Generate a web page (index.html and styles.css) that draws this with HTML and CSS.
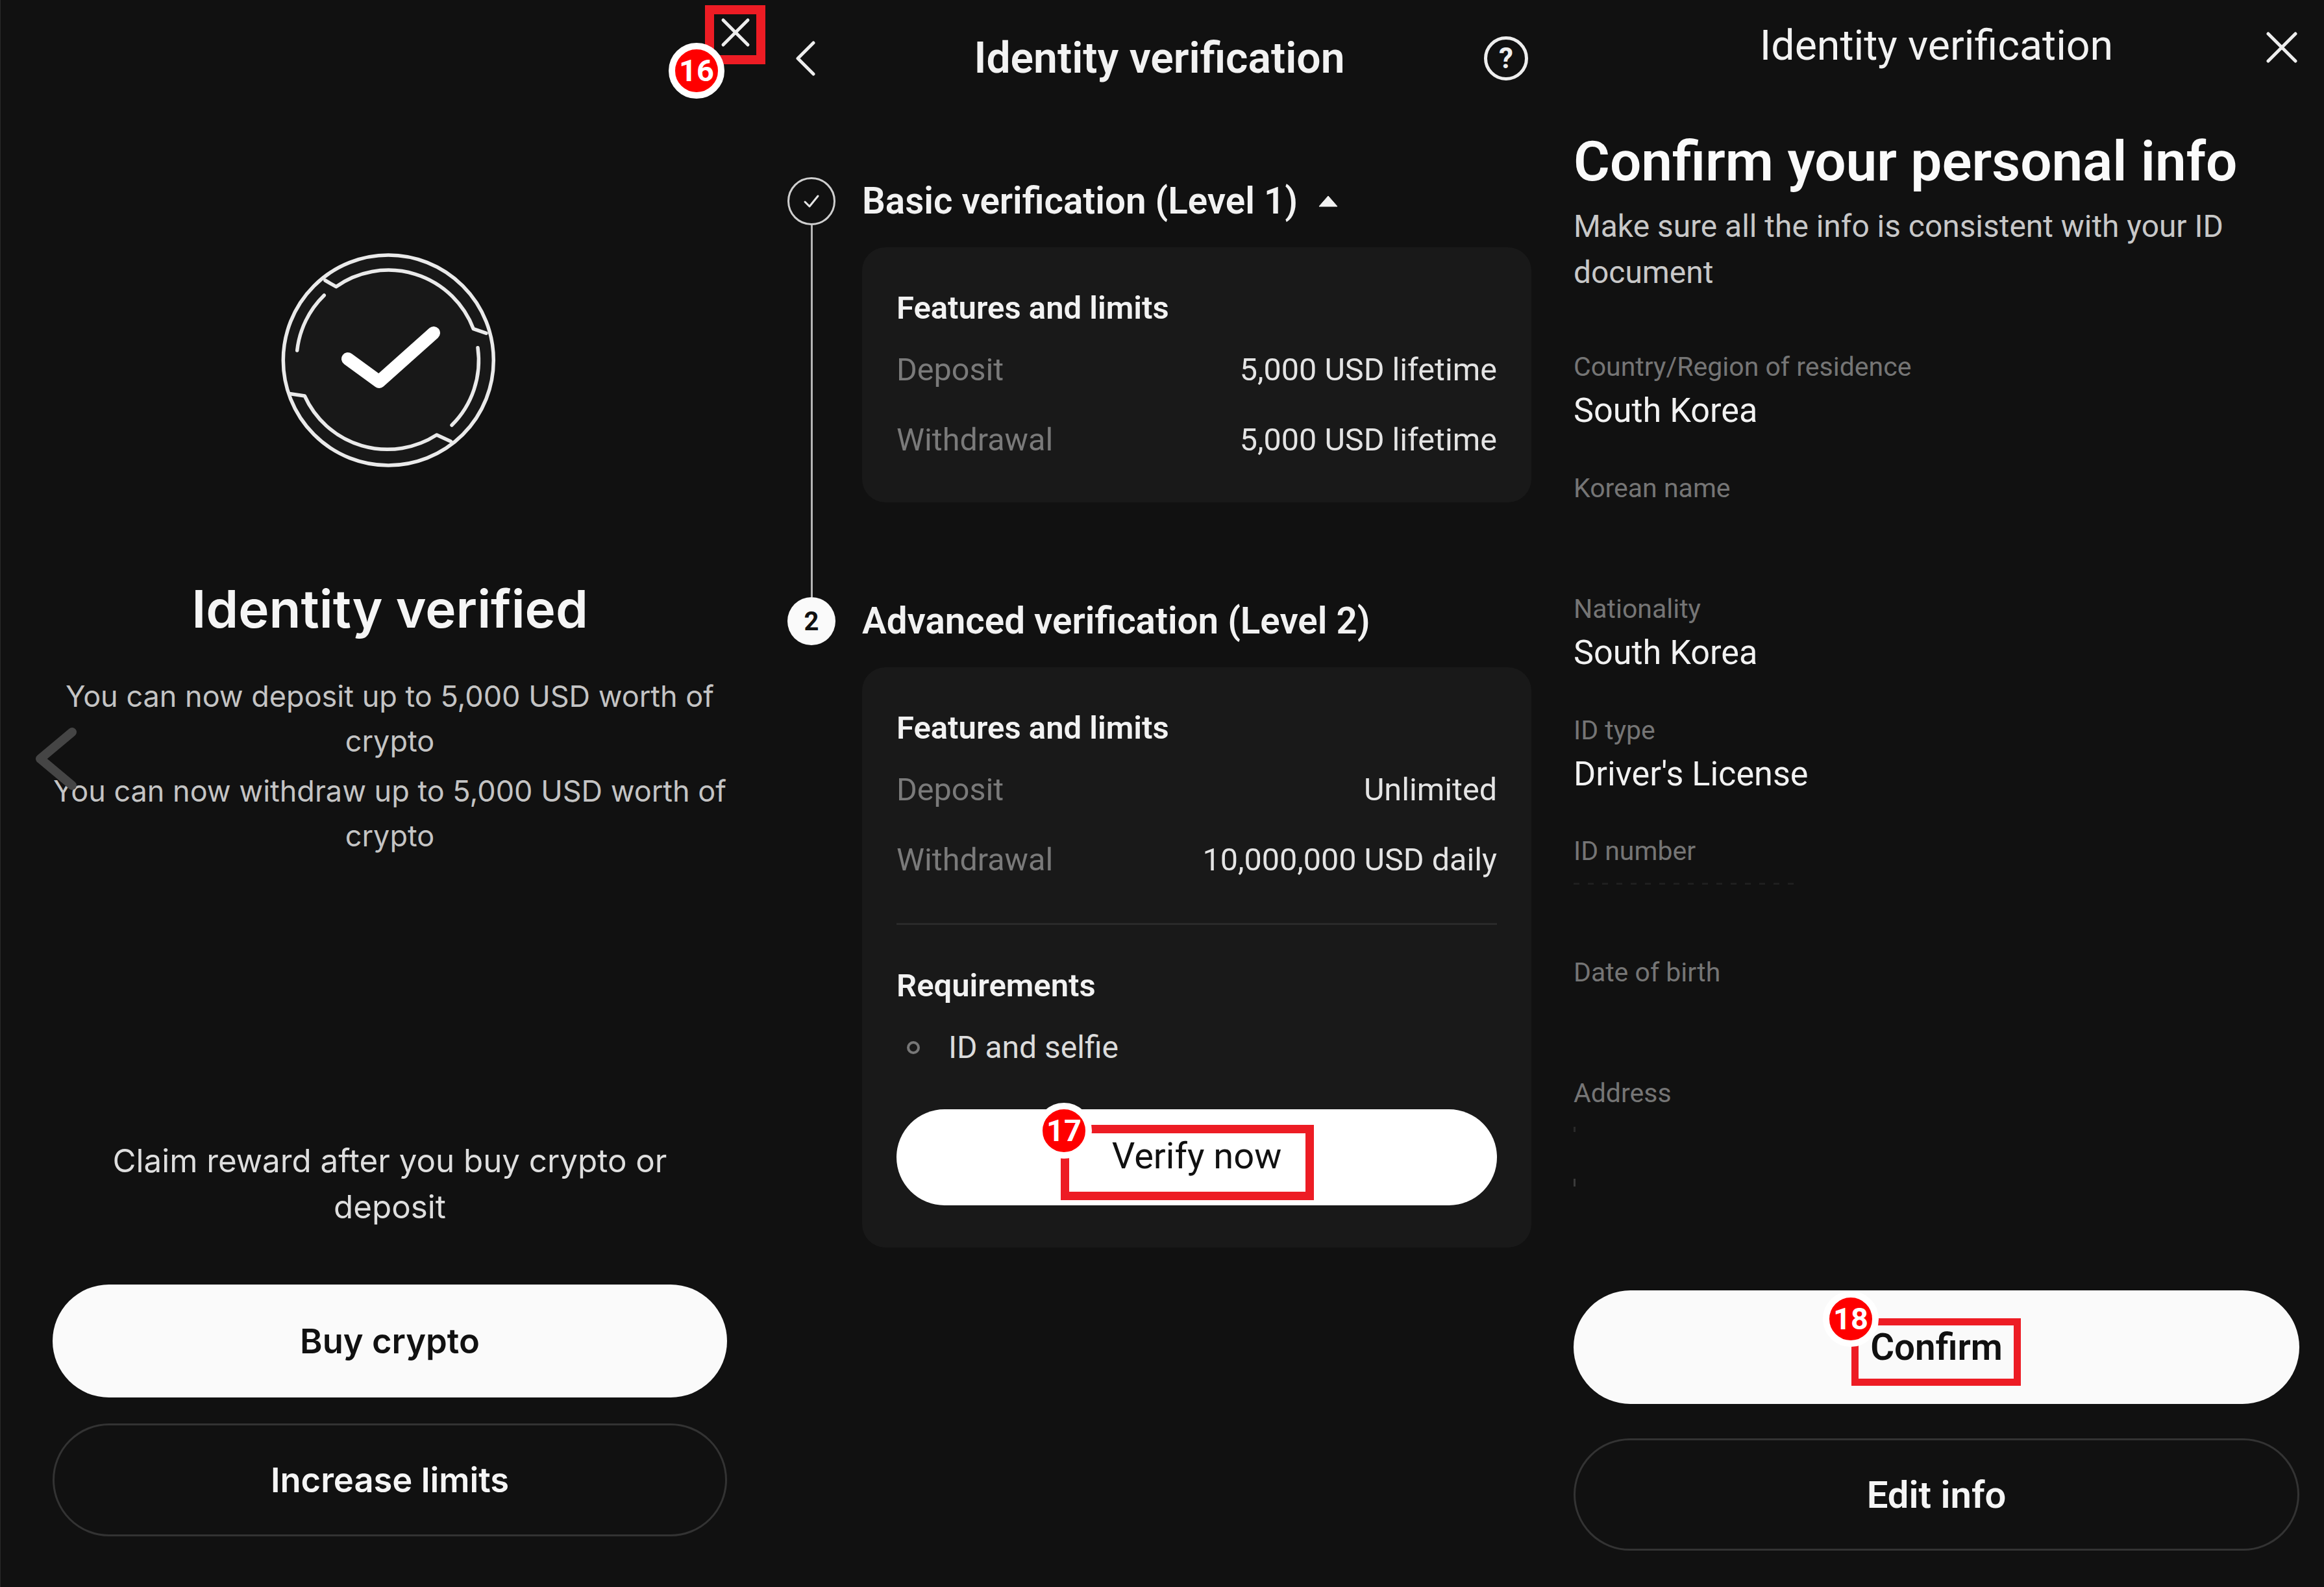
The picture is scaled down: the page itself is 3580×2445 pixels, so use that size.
FILE: index.html
```html
<!DOCTYPE html>
<html lang="en">
<head>
<meta charset="utf-8">
<title>Identity verification</title>
<link rel="stylesheet" href="styles.css">
</head>
<body>
<main class="screens">

  <section class="panel panel-result">
    <svg class="seal" viewBox="0 0 400 370" width="400" height="370" aria-hidden="true">
      <circle class="seal-disc" cx="197.3" cy="185" r="162"/>
      <path class="seal-line" d="M100 62 L116.7 71.7 A140 140 0 0 1 328.3 136.7 L348 143.3"/>
      <path class="seal-line" d="M46.7 236.7 L68.3 240 A140 140 0 0 0 271.7 300 L293.3 310"/>
      <path class="seal-line" d="M98.3 85 A140 140 0 0 0 56.7 170"/>
      <path class="seal-line" d="M335 165.7 A140 140 0 0 1 295 285"/>
      <path class="seal-check" d="M135 183 L183 218 L267 143"/>
    </svg>
    <h2 class="result-title">Identity verified</h2>
    <p class="result-text">You can now deposit up to 5,000 USD worth of<br>crypto</p>
    <p class="result-text result-text-next">You can now withdraw up to 5,000 USD worth of<br>crypto</p>
    <div class="result-foot">
      <p class="result-claim">Claim reward after you buy crypto or<br>deposit</p>
      <div class="actions actions-result">
        <button class="btn btn-solid btn-result">Buy crypto</button>
        <button class="btn btn-ghost btn-result">Increase limits</button>
      </div>
    </div>
    <svg class="ghost-chevron" viewBox="0 0 66 96" width="66" height="96" aria-hidden="true"><path d="M58 7 L9 48 L58 89"/></svg>
    <svg class="close-16" viewBox="0 0 48 48" width="48" height="48" aria-hidden="true"><path d="M5 5 L43 43 M43 5 L5 43"/></svg>
    <div class="callout callout-16"></div>
    <div class="badge badge-16">16</div>
  </section>

  <section class="panel panel-levels">
    <header class="topbar topbar-levels">
      <svg class="back" viewBox="0 0 30 54" width="30" height="54" aria-hidden="true"><path d="M27 3 L3 27 L27 51"/></svg>
      <h1 class="topbar-title">Identity verification</h1>
      <div class="help">?</div>
    </header>

    <div class="step step-first">
      <div class="rail">
        <div class="node node-done">
          <svg viewBox="0 0 30 30" width="30" height="30" aria-hidden="true"><path d="M5 16 L12 23 L25 7"/></svg>
        </div>
        <div class="rail-line"></div>
      </div>
      <div class="step-body">
        <div class="step-head">
          <h3 class="step-title">Basic verification (Level 1)</h3>
          <svg class="caret" viewBox="0 0 32 20" width="32" height="20" aria-hidden="true"><path d="M16 2 L30 18 L2 18 Z"/></svg>
        </div>
        <div class="card">
          <h4 class="card-title">Features and limits</h4>
          <div class="row"><span class="row-key">Deposit</span><span class="row-val">5,000 USD lifetime</span></div>
          <div class="row row-next"><span class="row-key">Withdrawal</span><span class="row-val">5,000 USD lifetime</span></div>
        </div>
      </div>
    </div>

    <div class="step">
      <div class="rail">
        <div class="node node-todo">2</div>
      </div>
      <div class="step-body">
        <div class="step-head">
          <h3 class="step-title">Advanced verification (Level 2)</h3>
        </div>
        <div class="card">
          <h4 class="card-title">Features and limits</h4>
          <div class="row"><span class="row-key">Deposit</span><span class="row-val">Unlimited</span></div>
          <div class="row row-next"><span class="row-key">Withdrawal</span><span class="row-val">10,000,000 USD daily</span></div>
          <div class="divider"></div>
          <h4 class="card-title">Requirements</h4>
          <div class="req"><span class="req-dot"></span><span class="req-text">ID and selfie</span></div>
          <button class="btn btn-white btn-verify">Verify now</button>
        </div>
      </div>
    </div>

    <div class="callout callout-17"></div>
    <div class="badge badge-17">17</div>
  </section>

  <section class="panel panel-confirm">
    <header class="topbar topbar-confirm">
      <span></span>
      <h1 class="topbar-title topbar-title-light">Identity verification</h1>
      <svg class="close" viewBox="0 0 48 48" width="48" height="48" aria-hidden="true"><path d="M3 3 L45 45 M45 3 L3 45"/></svg>
    </header>
    <h2 class="confirm-title">Confirm your personal info</h2>
    <p class="confirm-text">Make sure all the info is consistent with your ID<br>document</p>
    <dl class="fields">
      <div class="field"><dt class="field-label">Country/Region of residence</dt><dd class="field-value">South Korea</dd></div>
      <div class="field"><dt class="field-label">Korean name</dt><dd class="field-value"></dd></div>
      <div class="field"><dt class="field-label">Nationality</dt><dd class="field-value">South Korea</dd></div>
      <div class="field"><dt class="field-label">ID type</dt><dd class="field-value">Driver's License</dd></div>
      <div class="field"><dt class="field-label">ID number</dt><dd class="field-value"><span class="redacted"></span></dd></div>
      <div class="field"><dt class="field-label">Date of birth</dt><dd class="field-value"></dd></div>
      <div class="field"><dt class="field-label">Address</dt><dd class="field-value"><span class="speck"></span><span class="speck speck-next"></span></dd></div>
    </dl>
    <div class="actions actions-confirm">
      <button class="btn btn-solid btn-confirm">Confirm</button>
      <button class="btn btn-ghost btn-edit">Edit info</button>
    </div>
    <div class="callout callout-18"></div>
    <div class="badge badge-18">18</div>
  </section>

</main>
</body>
</html>
```

FILE: styles.css
```css
* { box-sizing: border-box; }
html, body { margin: 0; padding: 0; background: #111; }
body { width: 3580px; height: 2445px; overflow: hidden; font-family: Roboto, "Noto Sans", "Liberation Sans", sans-serif; color: #f2f2f2; }
h1, h2, h3, h4, p, dl, dd { margin: 0; }

.screens { display: grid; grid-template-columns: 1195px 1185px 1200px; height: 2445px; }
.panel { position: relative; display: flex; flex-direction: column; height: 2445px; }

/* result panel */
.panel-result { padding: 370px 75px 78px 80px; border-left: 1px solid #2a2a2a; font-family: Inter, "Noto Sans", sans-serif; }
.seal { display: block; align-self: center; flex: none; }
.seal-disc { fill: #181818; stroke: #eaeaea; stroke-width: 5.5; }
.seal-line { fill: none; stroke: #eaeaea; stroke-width: 5.5; stroke-linecap: round; stroke-linejoin: round; }
.seal-check { fill: none; stroke: #fff; stroke-width: 20; stroke-linecap: round; stroke-linejoin: round; }
.result-title { margin-top: 148px; font-size: 80px; line-height: 100px; font-weight: 600; text-align: center; color: #f5f5f5; white-space: nowrap; }
.result-text { margin-top: 50px; font-size: 45px; line-height: 69px; text-align: center; color: #c4c4c4; white-space: nowrap; }
.result-text-next { margin-top: 8px; }
.result-foot { margin-top: auto; }
.result-claim { font-size: 49.3px; line-height: 71px; text-align: center; color: #dedede; white-space: nowrap; }

.actions { display: flex; flex-direction: column; }
.actions-result { margin-top: 84px; gap: 40px; }
.btn { display: block; width: 100%; border-radius: 100px; font: inherit; text-align: center; padding: 0; }
.btn-solid { background: #fafafa; border: 0; color: #111; font-weight: 600; }
.btn-white { background: #fff; border: 0; color: #111; }
.btn-ghost { background: transparent; border: 3px solid #333; color: #f5f5f5; font-weight: 600; }
.btn-result { height: 174px; font-size: 52.5px; }

.ghost-chevron { position: absolute; left: 52px; top: 1121px; }
.ghost-chevron path { fill: none; stroke: #454545; stroke-width: 14; stroke-linecap: round; stroke-linejoin: round; }
.close-16 { position: absolute; left: 1108px; top: 26px; }
.close-16 path, .close path { fill: none; stroke: #eee; stroke-width: 5; stroke-linecap: round; }

/* levels panel */
.panel-levels { padding: 0 21px 0 18px; }
.topbar { display: grid; grid-template-columns: 1fr auto 1fr; align-items: center; }
.topbar-levels { height: 180px; margin-bottom: 93px; padding: 0 5px 0 13px; }
.topbar-title { font-size: 64.5px; line-height: 80px; font-weight: 500; white-space: nowrap; text-align: center; }
.topbar-levels .topbar-title { font-size: 66px; font-weight: 600; margin-right: 8px; }
.back { justify-self: start; }
.back path { fill: none; stroke: #eee; stroke-width: 5; stroke-linecap: round; stroke-linejoin: round; }
.help { justify-self: end; width: 68px; height: 68px; border: 5px solid #eee; border-radius: 50%; font-size: 44px; line-height: 58px; font-weight: 700; text-align: center; color: #eee; }

.step { display: grid; grid-template-columns: 74px 1fr; column-gap: 41px; }
.step-first .step-body { padding-bottom: 146px; }
.rail { display: flex; flex-direction: column; align-items: center; }
.node { flex: none; width: 74px; height: 74px; border-radius: 50%; display: flex; align-items: center; justify-content: center; }
.node-done { border: 3px solid #cfcfcf; }
.node-done path { fill: none; stroke: #e6e6e6; stroke-width: 3; stroke-linecap: round; stroke-linejoin: round; }
.node-todo { background: #fafafa; color: #111; font-size: 40px; font-weight: 700; }
.rail-line { flex: 1; width: 3px; background: #b5b5b5; }
.step-head { display: flex; align-items: center; gap: 31px; height: 74px; margin-bottom: 34px; }
.step-title { font-size: 56.5px; line-height: 74px; font-weight: 600; white-space: nowrap; }
.caret { fill: #f2f2f2; stroke: #f2f2f2; stroke-width: 1; stroke-linejoin: round; }

.card { background: #191919; border-radius: 36px; padding: 62px 53px 64px; }
.card-title { font-size: 49px; line-height: 64px; font-weight: 600; color: #f2f2f2; }
.row { display: flex; justify-content: space-between; margin-top: 31px; font-size: 48.5px; line-height: 64px; }
.row-next { margin-top: 44px; }
.row-key { color: #7a7a7a; }
.row-val { color: #e4e4e4; }
.divider { height: 3px; margin: 65px 0 62px; background: #2a2a2a; }
.req { display: flex; align-items: center; margin-top: 31px; padding-left: 16px; }
.req-dot { flex: none; width: 20px; height: 20px; border: 4px solid #777; border-radius: 50%; margin-right: 44px; }
.req-text { font-size: 48px; line-height: 64px; color: #dcdcdc; }
.btn-verify { height: 148px; margin-top: 63px; margin-bottom: 1px; padding-bottom: 4px; font-size: 56px; }

/* confirm panel */
.panel-confirm { padding: 0 38px 56px 44px; }
.topbar-confirm { height: 140px; margin-bottom: 54px; }
.topbar-title-light { font-weight: 400; }
.topbar-confirm .close { justify-self: end; margin-right: 3px; margin-top: 6px; }
.confirm-title { font-size: 85.5px; line-height: 110px; font-weight: 600; white-space: nowrap; color: #fafafa; }
.confirm-text { margin-top: 10px; font-size: 47.9px; line-height: 71px; color: #c8c8c8; white-space: nowrap; }
.fields { margin-top: 79px; display: grid; grid-auto-rows: 186.5px; }
.field-label { font-size: 41px; line-height: 60px; color: #757575; white-space: nowrap; }
.field-value { margin-top: 3px; font-size: 52.2px; line-height: 70px; color: #f2f2f2; white-space: nowrap; }
.redacted { display: block; width: 346px; height: 3px; margin-top: 19px; background: repeating-linear-gradient(90deg, #1f1f1f 0 9px, transparent 9px 22px); }
.speck { display: block; width: 3px; height: 8px; margin-top: 22px; background: #2a2a2a; }
.speck-next { margin-top: 72px; height: 12px; background: #3a3a3a; }
.actions-confirm { margin-top: auto; gap: 53px; }
.btn-confirm { height: 175px; font-size: 56.5px; }
.btn-edit { height: 173px; font-size: 58px; }

/* annotations */
.callout { position: absolute; border-style: solid; border-color: #ed1c24; }
.callout-16 { left: 1085px; top: 8px; width: 93px; height: 91px; border-width: 14px; }
.callout-17 { left: 439px; top: 1733px; width: 390px; height: 116px; border-width: 13px; }
.callout-18 { left: 472px; top: 2031px; width: 261px; height: 104px; border-width: 11px; }
.badge { position: absolute; width: 86px; height: 86px; border: 10px solid #fff; border-radius: 50%; background: #f00; color: #fff; font-family: Roboto, "Noto Sans", sans-serif; font-size: 47px; line-height: 66px; font-weight: 700; text-align: center; }
.badge-16 { left: 1029px; top: 66px; }
.badge-17 { left: 401px; top: 1699px; }
.badge-18 { left: 428px; top: 1989px; }
```
